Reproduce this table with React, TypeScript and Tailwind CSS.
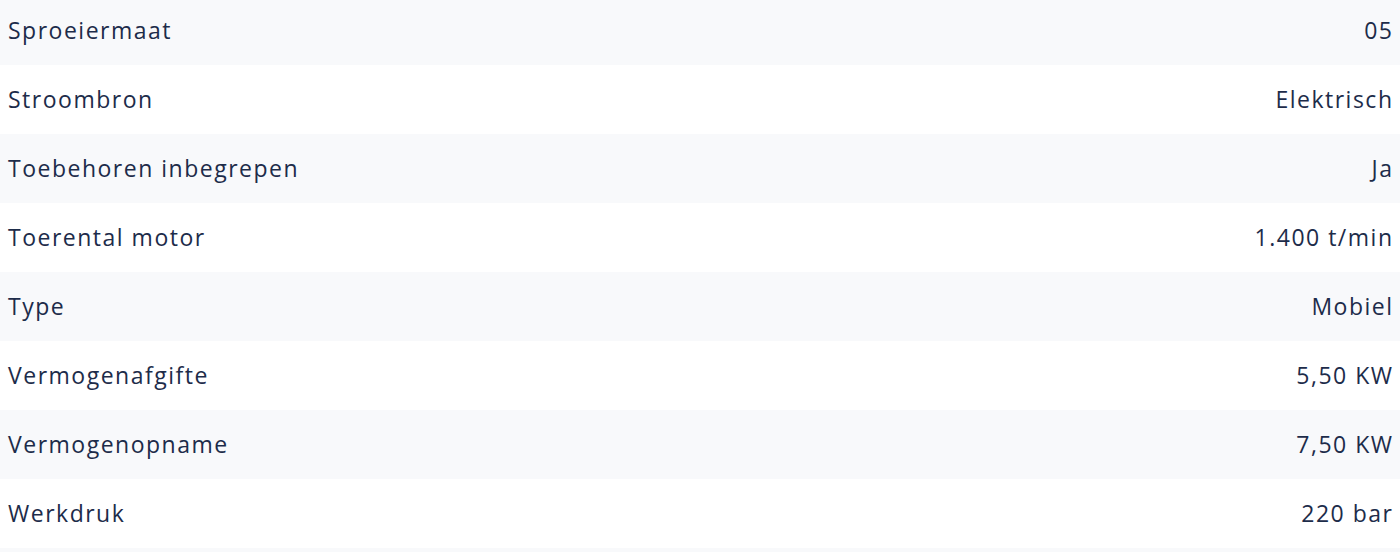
const specs: [string, string][] = [
  ["Sproeiermaat", "05"],
  ["Stroombron", "Elektrisch"],
  ["Toebehoren inbegrepen", "Ja"],
  ["Toerental motor", "1.400 t/min"],
  ["Type", "Mobiel"],
  ["Vermogenafgifte", "5,50 KW"],
  ["Vermogenopname", "7,50 KW"],
  ["Werkdruk", "220 bar"],
  ["", ""],
];

export default function App() {
  return (
    <div className="h-[552px] overflow-hidden bg-white">
      <div className="-mt-1 font-['Open_Sans',sans-serif] text-[23px] tracking-[1.5px] text-[#1d2c4a]">
        {specs.map(([label, value], i) => (
          <div
            key={i}
            className={`flex h-[69px] items-center justify-between pl-2 pr-[6.5px] ${
              i % 2 === 0 ? "bg-[#f8f9fb]" : "bg-white"
            }`}
          >
            <span>{label}</span>
            <span>{value}</span>
          </div>
        ))}
      </div>
    </div>
  );
}
